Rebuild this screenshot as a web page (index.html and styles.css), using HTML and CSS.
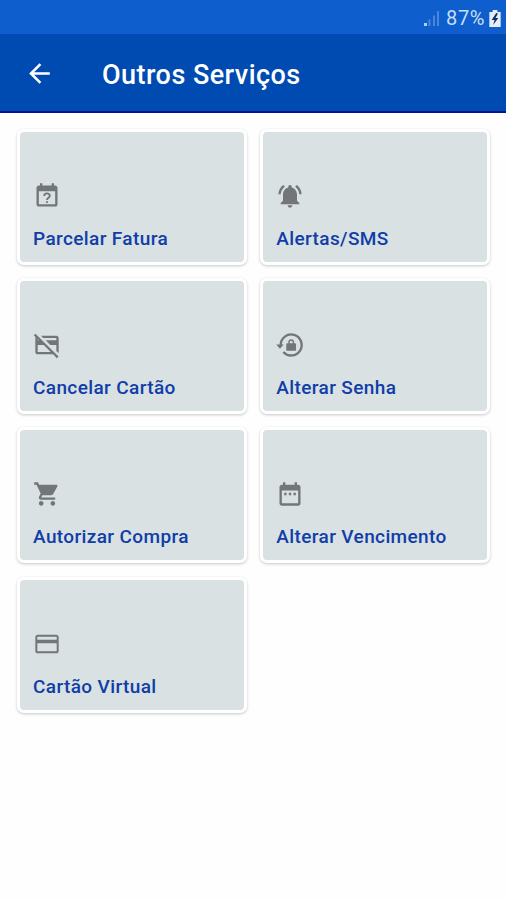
FILE: index.html
```
<!DOCTYPE html>
<html lang="pt-BR">
<head>
    <meta charset="UTF-8">
    <meta name="viewport" content="width=device-width, initial-scale=1.0">
    <title>Outros Serviços</title>
    <link rel="stylesheet" href="styles.css">
</head>
<body>
    <div class="status-bar">
        <svg class="signal" viewBox="0 0 17 17">
            <path class="on" d="M1 13h3v3H1z"/>
            <path d="M5.5 9.500h2V16h-2zM10 5.500h2V16h-2zM14 1h2v15h-2z"/>
        </svg>
        <span class="battery-level">87%</span>
        <svg class="battery" viewBox="0 0 12 18">
            <path fill="#e4eefb" d="M3.500 0h5v2H12v16H0V2h3.500z"/>
            <path fill="#12305f" d="M7.500 3L2.500 10.500h3L4 16l5.500-7.500h-3L9 4z"/>
        </svg>
    </div>

    <header class="toolbar">
        <svg class="back" viewBox="0 0 24 24">
            <path d="M20 11H7.830l5.590-5.590L12 4l-8 8 8 8 1.410-1.410L7.830 13H20v-2z"/>
        </svg>
        <h1>Outros Serviços</h1>
    </header>

    <main class="services">
        <div class="card">
            <svg class="icon" viewBox="0 0 24 24">
                <path d="M19 3h-1V1h-2v2H8V1H6v2H5c-1.110 0-2 .9-2 2v14c0 1.100.89 2 2 2h14c1.100 0 2-.9 2-2V5c0-1.100-.9-2-2-2zm0 16H5V8h14v11z"/>
                <path class="question" d="M9.600 12c0-3 4.800-3 4.800-.3 0 1.700-2.400 1.800-2.400 3.700M12 16.400v1.600"/>
            </svg>
            <span>Parcelar Fatura</span>
        </div>
        <div class="card">
            <svg class="icon" viewBox="0 0 24 24">
                <path d="M7.580 4.080L6.150 2.650C3.750 4.480 2.170 7.300 2.030 10.500h2c.15-2.650 1.510-4.970 3.550-6.420zm12.390 6.420h2c-.15-3.200-1.730-6.020-4.120-7.850l-1.420 1.430c2.020 1.450 3.390 3.770 3.540 6.420zM18 11c0-3.070-1.640-5.640-4.500-6.320V4c0-.83-.67-1.500-1.500-1.500s-1.500.67-1.500 1.500v.68C7.630 5.360 6 7.920 6 11v5l-2 2v1h16v-1l-2-2v-5zm-6 11c.14 0 .27-.01.4-.04.65-.14 1.180-.58 1.440-1.180.1-.24.15-.5.15-.78h-4c.01 1.100.9 2 2.010 2z"/>
            </svg>
            <span>Alertas/SMS</span>
        </div>
        <div class="card">
            <svg class="icon" viewBox="0 0 24 24">
                <path d="M6.830 4H20c1.110 0 2 .89 2 2v12c0 .34-.08.66-.23.940L20 17.170V12h-5.170l-4-4H20V6H8.830l-2-2zM20.490 23.310L17.170 20H4c-1.110 0-2-.89-2-2L2.010 6c0-.29.060-.56.170-.81L.69 3.690 2.100 2.280l19.800 19.620-1.410 1.410zM4 6.830V8h1.170L4 6.830zM15.170 18l-6-6H4v6h11.170z"/>
            </svg>
            <span>Cancelar Cartão</span>
        </div>
        <div class="card">
            <svg class="icon" viewBox="0 0 24 24">
                <path class="ring" d="M4 12.500V12a9 9 0 1 1 2.300 6"/>
                <path d="M.2 11.500h6.400l-3.200 3.800z"/>
                <path d="M16.200 10.500h-.7V9.600a2.500 2.500 0 0 0-5 0v.9h-.7c-.55 0-1 .45-1 1V16c0 .55.450 1 1 1h6.400c.55 0 1-.45 1-1v-4.500c0-.55-.45-1-1-1zm-1.900 0h-2.600v-.9a1.300 1.300 0 0 1 2.600 0z"/>
            </svg>
            <span>Alterar Senha</span>
        </div>
        <div class="card">
            <svg class="icon" viewBox="0 0 24 24">
                <path d="M7 18c-1.100 0-1.990.9-1.990 2S5.900 22 7 22s2-.9 2-2-.9-2-2-2zM1 2v2h2l3.600 7.590-1.350 2.450c-.16.280-.25.610-.25.960 0 1.100.9 2 2 2h12v-2H7.420c-.14 0-.25-.11-.25-.25l.03-.12.9-1.630h7.450c.75 0 1.410-.41 1.750-1.030l3.580-6.490c.08-.14.12-.31.12-.48 0-.55-.45-1-1-1H5.210l-.94-2H1zm16 16c-1.100 0-1.990.9-1.990 2s.89 2 1.990 2 2-.9 2-2-.9-2-2-2z"/>
            </svg>
            <span>Autorizar Compra</span>
        </div>
        <div class="card">
            <svg class="icon" viewBox="0 0 24 24">
                <path d="M9 11H7v2h2v-2zm4 0h-2v2h2v-2zm4 0h-2v2h2v-2zm2-7h-1V2h-2v2H8V2H6v2H5c-1.110 0-2 .9-2 2v14c0 1.100.89 2 2 2h14c1.100 0 2-.9 2-2V6c0-1.100-.9-2-2-2zm0 16H5V9h14v11z"/>
            </svg>
            <span>Alterar Vencimento</span>
        </div>
        <div class="card">
            <svg class="icon" viewBox="0 0 24 24">
                <path d="M20 4H4c-1.110 0-1.990.89-1.990 2L2 18c0 1.110.89 2 2 2h16c1.110 0 2-.89 2-2V6c0-1.110-.89-2-2-2zm.3 14.300H3.700V11.300h16.600v7zm0-10H3.700V5.700h16.600v2.600z"/>
            </svg>
            <span>Cartão Virtual</span>
        </div>
    </main>
</body>
</html>
```
FILE: styles.css
```
* {
    box-sizing: border-box;
}
body {
    margin: 0;
    min-height: 900px;
    font-family: Roboto, sans-serif;
    background-color: #fefefe;
}
.status-bar {
    display: flex;
    align-items: center;
    justify-content: flex-end;
    height: 34px;
    padding: 2px 5px 0 0;
    background-color: #0e5fcd;
    color: #c9ddf8;
}
.signal {
    width: 17px;
    height: 17px;
    margin-right: 6px;
    fill: #4a87dc;
}
.signal .on {
    fill: #b5d0f5;
}
.battery-level {
    font-size: 20px;
    line-height: 24px;
    letter-spacing: 0.6px;
    margin-right: 4px;
}
.battery {
    width: 12px;
    height: 17px;
}
.toolbar {
    display: flex;
    align-items: center;
    height: 79px;
    padding: 5px 24px 0;
    background-color: #004bb1;
    border-bottom: 2px solid #07129a;
    color: #fff;
}
.back {
    width: 31px;
    height: 31px;
    margin-top: -4px;
    fill: #fff;
}
h1 {
    margin: 0 0 0 47px;
    font-size: 27px;
    font-weight: 500;
    line-height: 36px;
    letter-spacing: 0.45px;
}
.services {
    display: grid;
    grid-template-columns: 230px 230px;
    grid-auto-rows: 136px;
    gap: 13.2px 13.3px;
    padding: 16px 17px;
}
.card {
    display: flex;
    flex-direction: column;
    justify-content: flex-end;
    padding: 0 13px 11px;
    background-color: #d9e1e3;
    border: 3px solid #fff;
    border-radius: 7px;
    box-shadow: 0 1px 3px rgba(0,0,0,0.22);
}
.icon {
    display: block;
    width: 28px;
    height: 28px;
    margin-bottom: 17px;
    fill: #737677;
    overflow: visible;
}
.question {
    fill: none;
    stroke: #737677;
    stroke-width: 1.6;
}
.ring {
    fill: none;
    stroke: #737677;
    stroke-width: 2;
}
.card span {
    font-size: 19px;
    font-weight: 500;
    line-height: 24px;
    letter-spacing: 0.38px;
    color: #103da8;
}
```
